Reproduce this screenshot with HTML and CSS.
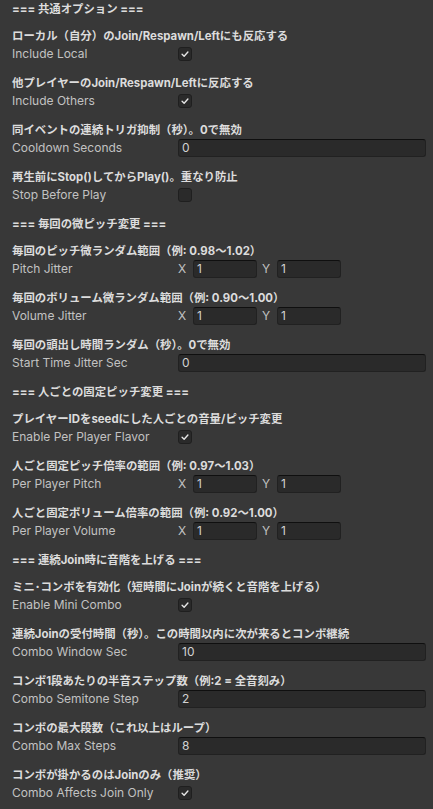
FILE: index.html
```html
<!DOCTYPE html>
<html lang="ja">
<head>
<meta charset="utf-8">
<title>Inspector</title>
<link rel="stylesheet" href="styles.css">
</head>
<body>
<div class="inspector">
  <div class="section first">=== 共通オプション ===</div>
  <div class="prop">
    <div class="hdr">ローカル（自分）のJoin/Respawn/Leftにも反応する</div>
    <div class="row"><span class="lbl">Include Local</span><span class="check"><svg viewBox="0 0 14 14"><path d="M3.6 7.3 L6 9.6 L10.4 4.6"/></svg></span></div>
  </div>
  <div class="prop">
    <div class="hdr">他プレイヤーのJoin/Respawn/Leftに反応する</div>
    <div class="row"><span class="lbl">Include Others</span><span class="check"><svg viewBox="0 0 14 14"><path d="M3.6 7.3 L6 9.6 L10.4 4.6"/></svg></span></div>
  </div>
  <div class="prop">
    <div class="hdr">同イベントの連続トリガ抑制（秒）。0で無効</div>
    <div class="row"><span class="lbl">Cooldown Seconds</span><span class="field">0</span></div>
  </div>
  <div class="prop">
    <div class="hdr">再生前にStop()してからPlay()。重なり防止</div>
    <div class="row"><span class="lbl">Stop Before Play</span><span class="check"></span></div>
  </div>

  <div class="section">=== 毎回の微ピッチ変更 ===</div>
  <div class="prop">
    <div class="hdr">毎回のピッチ微ランダム範囲（例: 0.98〜1.02）</div>
    <div class="row"><span class="lbl">Pitch Jitter</span>
      <span class="vec"><span class="axis">X</span><span class="field">1</span><span class="axis">Y</span><span class="field">1</span></span></div>
  </div>
  <div class="prop">
    <div class="hdr">毎回のボリューム微ランダム範囲（例: 0.90〜1.00）</div>
    <div class="row"><span class="lbl">Volume Jitter</span>
      <span class="vec"><span class="axis">X</span><span class="field">1</span><span class="axis">Y</span><span class="field">1</span></span></div>
  </div>
  <div class="prop">
    <div class="hdr">毎回の頭出し時間ランダム（秒）。0で無効</div>
    <div class="row"><span class="lbl">Start Time Jitter Sec</span><span class="field">0</span></div>
  </div>

  <div class="section">=== 人ごとの固定ピッチ変更 ===</div>
  <div class="prop">
    <div class="hdr">プレイヤーIDをseedにした人ごとの音量/ピッチ変更</div>
    <div class="row"><span class="lbl">Enable Per Player Flavor</span><span class="check"><svg viewBox="0 0 14 14"><path d="M3.6 7.3 L6 9.6 L10.4 4.6"/></svg></span></div>
  </div>
  <div class="prop">
    <div class="hdr">人ごと固定ピッチ倍率の範囲（例: 0.97〜1.03）</div>
    <div class="row"><span class="lbl">Per Player Pitch</span>
      <span class="vec"><span class="axis">X</span><span class="field">1</span><span class="axis">Y</span><span class="field">1</span></span></div>
  </div>
  <div class="prop">
    <div class="hdr">人ごと固定ボリューム倍率の範囲（例: 0.92〜1.00）</div>
    <div class="row"><span class="lbl">Per Player Volume</span>
      <span class="vec"><span class="axis">X</span><span class="field">1</span><span class="axis">Y</span><span class="field">1</span></span></div>
  </div>

  <div class="section">=== 連続Join時に音階を上げる ===</div>
  <div class="prop">
    <div class="hdr">ミニ･コンボを有効化（短時間にJoinが続くと音階を上げる）</div>
    <div class="row"><span class="lbl">Enable Mini Combo</span><span class="check"><svg viewBox="0 0 14 14"><path d="M3.6 7.3 L6 9.6 L10.4 4.6"/></svg></span></div>
  </div>
  <div class="prop">
    <div class="hdr">連続Joinの受付時間（秒）。この時間以内に次が来るとコンボ継続</div>
    <div class="row"><span class="lbl">Combo Window Sec</span><span class="field">10</span></div>
  </div>
  <div class="prop">
    <div class="hdr">コンボ1段あたりの半音ステップ数（例:2 = 全音刻み）</div>
    <div class="row"><span class="lbl">Combo Semitone Step</span><span class="field">2</span></div>
  </div>
  <div class="prop">
    <div class="hdr">コンボの最大段数（これ以上はループ）</div>
    <div class="row"><span class="lbl">Combo Max Steps</span><span class="field">8</span></div>
  </div>
  <div class="prop">
    <div class="hdr">コンボが掛かるのはJoinのみ（推奨）</div>
    <div class="row"><span class="lbl">Combo Affects Join Only</span><span class="check"><svg viewBox="0 0 14 14"><path d="M3.6 7.3 L6 9.6 L10.4 4.6"/></svg></span></div>
  </div>
</div>
</body>
</html>
```
FILE: styles.css
```css
html, body {
  margin: 0;
  padding: 0;
  background: #383838;
}

body {
  font-family: Inter, "Noto Sans CJK JP", "Noto Sans", sans-serif;
  font-size: 12px;
  color: #c4c4c4;
}

.inspector {
  padding: 0 7px 0 12px;
}

.section,
.hdr {
  height: 18px;
  line-height: 18px;
  font-size: 11.4px;
  font-weight: 700;
  color: #dcdcdc;
  white-space: nowrap;
}

.section {
  margin-top: 11px;
}

.section.first {
  margin-top: 0;
}

.prop {
  margin-top: 11px;
}

.section + .prop {
  margin-top: 9px;
}

.row {
  display: grid;
  grid-template-columns: 166px 1fr;
  align-items: center;
  height: 18px;
}

.lbl {
  line-height: 18px;
  white-space: nowrap;
  color: #c2c2c2;
}

.field {
  box-sizing: border-box;
  height: 18px;
  line-height: 16px;
  padding: 0 3px;
  background: #2a2a2a;
  border: 1px solid #212121;
  border-top-color: #0f0f0f;
  border-radius: 3px;
  color: #d2d2d2;
}

.check {
  box-sizing: border-box;
  width: 14px;
  height: 14px;
  background: #2a2a2a;
  border: 1px solid #1f1f1f;
  border-radius: 3px;
  display: flex;
}

.check svg {
  width: 12px;
  height: 12px;
  fill: none;
  stroke: #e6e6e6;
  stroke-width: 1.6;
  stroke-linecap: round;
  stroke-linejoin: round;
}

.vec {
  display: grid;
  grid-template-columns: 15px 64px 20px 64px;
  align-items: center;
}

.axis {
  line-height: 18px;
  color: #c2c2c2;
}

.axis + .field + .axis {
  padding-left: 5px;
}
```
